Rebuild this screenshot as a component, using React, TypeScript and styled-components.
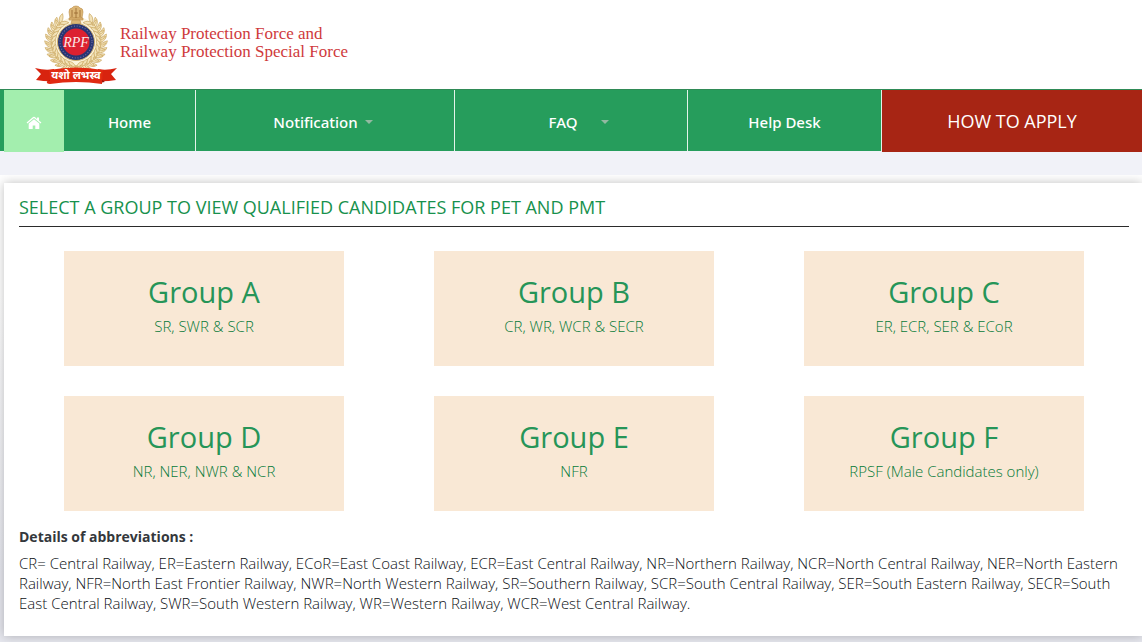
import React from "react";
import styled, { createGlobalStyle } from "styled-components";

const GlobalStyle = createGlobalStyle`
  * { box-sizing: border-box; }
  body {
    margin: 0;
    background: #e6e7ee;
    color: #34383c;
    font-family: "Open Sans", "Noto Sans", sans-serif;
    font-size: 15px;
    line-height: 20px;
  }
`;

const Header = styled.header`
  display: flex;
  height: 89px;
  padding-left: 30px;
  background: #fff;
`;

const Brand = styled.a`
  display: flex;
  color: #cf3a3c;
  text-decoration: none;
`;

const BrandName = styled.span`
  padding-top: 25px;
  font: 17px/18px "Liberation Serif", serif;
`;

const Nav = styled.nav`
  display: grid;
  grid-template-columns: 60px 132fr 259fr 233fr 194fr 260fr;
  height: 63px;
  padding-left: 4px;
  border-top: 1px solid #2f8a56;
  background: linear-gradient(#269d5c 61px, #f1f2f8 61px);
`;

const NavLink = styled.a<{ $gap?: number; $indent?: number; $outdent?: number }>`
  display: flex;
  align-items: center;
  justify-content: center;
  gap: ${(p) => p.$gap ?? 0}px;
  height: 61px;
  padding: 3px ${(p) => p.$outdent ?? 0}px 0 ${(p) => p.$indent ?? 0}px;
  border-right: 1px solid #e3f3ea;
  color: #fff;
  font-family: "Noto Sans", sans-serif;
  font-size: 15px;
  font-weight: 500;
  text-decoration: none;
`;

const HomeLink = styled(NavLink)`
  height: 62px;
  border: 0;
  background: #a3eeae;
`;

const ApplyLink = styled(NavLink)`
  height: 62px;
  padding-top: 0;
  border: 0;
  background: #a72514;
  font-family: "Open Sans", sans-serif;
  font-size: 18px;
  font-weight: 400;
`;

const Caret = styled.span`
  border: 4px solid transparent;
  border-top-color: #93b9a1;
  border-bottom: 0;
`;

const Band = styled.div`
  height: 23px;
  background: #f1f2f8;
`;

const Main = styled.main`
  padding: 8px 0 6px 4px;
  background: linear-gradient(#fff 120px, #e6e7ee 400px);
  overflow: hidden;
`;

const Panel = styled.section`
  padding: 13px 13px 23px 15px;
  background: #fff;
  box-shadow: 0 0 10px rgba(0, 0, 0, 0.25);
`;

const Title = styled.h1`
  margin: 0 0 24px;
  padding-bottom: 8px;
  border-bottom: 1px solid #2b2b2b;
  color: #17914d;
  font-size: 18px;
  font-weight: 500;
  line-height: 22px;
`;

const Groups = styled.div`
  display: grid;
  grid-template-columns: repeat(3, 1fr);
  row-gap: 30px;
`;

const GroupCard = styled.a`
  margin: 0 45px;
  padding: 23px 8px 29px;
  background: #f9e8d5;
  color: #269558;
  text-align: center;
  text-decoration: none;
`;

const GroupName = styled.h2`
  margin: 0 0 5px;
  font-size: 29px;
  font-weight: 400;
  line-height: 36px;
`;

const Zones = styled.p`
  margin: 0;
  color: #067a38;
  font-weight: 300;
  line-height: 22px;
`;

const DetailsTitle = styled.h3`
  margin: 16px 0 6px;
  font-size: 14px;
  font-weight: 700;
  line-height: 20px;
`;

const Details = styled.p`
  margin: 0;
  color: #0c0f14;
  font-weight: 300;
`;

const groups = [
  ["Group A", "SR, SWR & SCR"],
  ["Group B", "CR, WR, WCR & SECR"],
  ["Group C", "ER, ECR, SER & ECoR"],
  ["Group D", "NR, NER, NWR & NCR"],
  ["Group E", "NFR"],
  ["Group F", "RPSF (Male Candidates only)"],
];

const leafAngles = Array.from({ length: 12 }, (_, i) => 82 - i * 12.5);

const Branch = () => (
  <>
    {leafAngles.map((a) => (
      <g key={a} transform={`rotate(${a})`} fill="#f3e3b9" stroke="#cdab66" strokeWidth="0.7">
        <path d="M24 3q1-6 7-8q0 6-7 8z" />
        <path d="M25 3q-5-2-5-8q5 2 5 8z" />
        <path d="M23 4q4-1 7 0q-4 3-7 0z" />
      </g>
    ))}
  </>
);

const Emblem = () => (
  <svg width="90" height="89" viewBox="0 0 90 89" role="img" aria-label="Railway Protection Force emblem">
    <circle cx="46" cy="42" r="25" fill="#fbf3dc" />
    <g transform="translate(46 42)">
      <Branch />
      <g transform="scale(-1 1)"><Branch /></g>
    </g>
    <g fill="#dcb675" stroke="#ba8c46" strokeWidth="0.6">
      <path d="M39 12q0-4 3-4q1-2 4-2t4 2q3 0 3 4l-1 6h-12z" />
      <path d="M39 18h14v2h-14z" />
      <path d="M42 20h8l1 4h-10z" />
    </g>
    <path d="M42 10v7M46 8v10M50 10v7M44 13h4" stroke="#95662f" strokeWidth="0.8" fill="none" />
    <circle cx="46" cy="42" r="18.5" fill="#293673" stroke="#d0b06e" strokeWidth="1" />
    <circle cx="46" cy="42" r="16" fill="none" stroke="#6f6fa3" strokeWidth="1.2" strokeDasharray="1 1.8" />
    <circle cx="46" cy="42" r="13.5" fill="#dc2130" />
    <text x="46" y="47" textAnchor="middle" fontFamily="Liberation Serif, serif" fontStyle="italic" fontSize="14" fill="#fbeaea">RPF</text>
    <path d="M5 68q11 3 19 1l3 12q-10 1-21-1l5-6z" fill="#d8230f" />
    <path d="M87 68q-11 3-19 1l-3 12q10 1 21-1l-5-6z" fill="#d8230f" />
    <path d="M17 82l4-3 3 4z M75 82l-4-3-3 4z" fill="#8f1208" />
    <path d="M19 70q27-5 54 0l-1 14q-26-4-52 0q-4 0-3-3q3 1 3-2z" fill="#e02a12" />
    <text x="46" y="79" textAnchor="middle" fontFamily="Noto Sans, sans-serif" fontWeight="700" fontSize="11" fill="#fff">यशो लभस्व</text>
  </svg>
);

const HomeIcon = () => (
  <svg width="16" height="14" viewBox="0 0 16 14" fill="#fff" aria-hidden="true">
    <path d="M8 3.2l5.3 4.4v4.9q0 .5-.5.5H9.3V9.5H6.7V13H3.2q-.5 0-.5-.5V7.6z" />
    <path d="M8 .8q.5 0 .9.3l2.1 1.8V1.5h2v3.1l2.4 2-.8.9L8 2.1 1.4 7.5l-.8-.9 6.500-5.500Q7.500.8 8 .8z" />
  </svg>
);

export default function App() {
  return (
    <>
      <GlobalStyle />
      <Header>
        <Brand href="#">
          <Emblem />
          <BrandName>
            Railway Protection Force and
            <br />
            Railway Protection Special Force
          </BrandName>
        </Brand>
      </Header>
      <Nav>
        <HomeLink href="#" aria-label="Home page"><HomeIcon /></HomeLink>
        <NavLink href="#">Home</NavLink>
        <NavLink href="#" $gap={7} $outdent={4}>Notification<Caret /></NavLink>
        <NavLink href="#" $gap={24} $indent={16}>FAQ<Caret /></NavLink>
        <NavLink href="#">Help Desk</NavLink>
        <ApplyLink href="#">HOW TO APPLY</ApplyLink>
      </Nav>
      <Band />
      <Main>
        <Panel>
          <Title>SELECT A GROUP TO VIEW QUALIFIED CANDIDATES FOR PET AND PMT</Title>
          <Groups>
            {groups.map(([name, zones]) => (
              <GroupCard href="#" key={name}>
                <GroupName>{name}</GroupName>
                <Zones>{zones}</Zones>
              </GroupCard>
            ))}
          </Groups>
          <DetailsTitle>Details of abbreviations :</DetailsTitle>
          <Details>
            CR= Central Railway, ER=Eastern Railway, ECoR=East Coast Railway, ECR=East Central Railway, NR=Northern Railway,
            NCR=North Central Railway, NER=North Eastern Railway, NFR=North East Frontier Railway, NWR=North Western Railway,
            SR=Southern Railway, SCR=South Central Railway, SER=South Eastern Railway, SECR=South East Central Railway,
            SWR=South Western Railway, WR=Western Railway, WCR=West Central Railway.
          </Details>
        </Panel>
      </Main>
    </>
  );
}
